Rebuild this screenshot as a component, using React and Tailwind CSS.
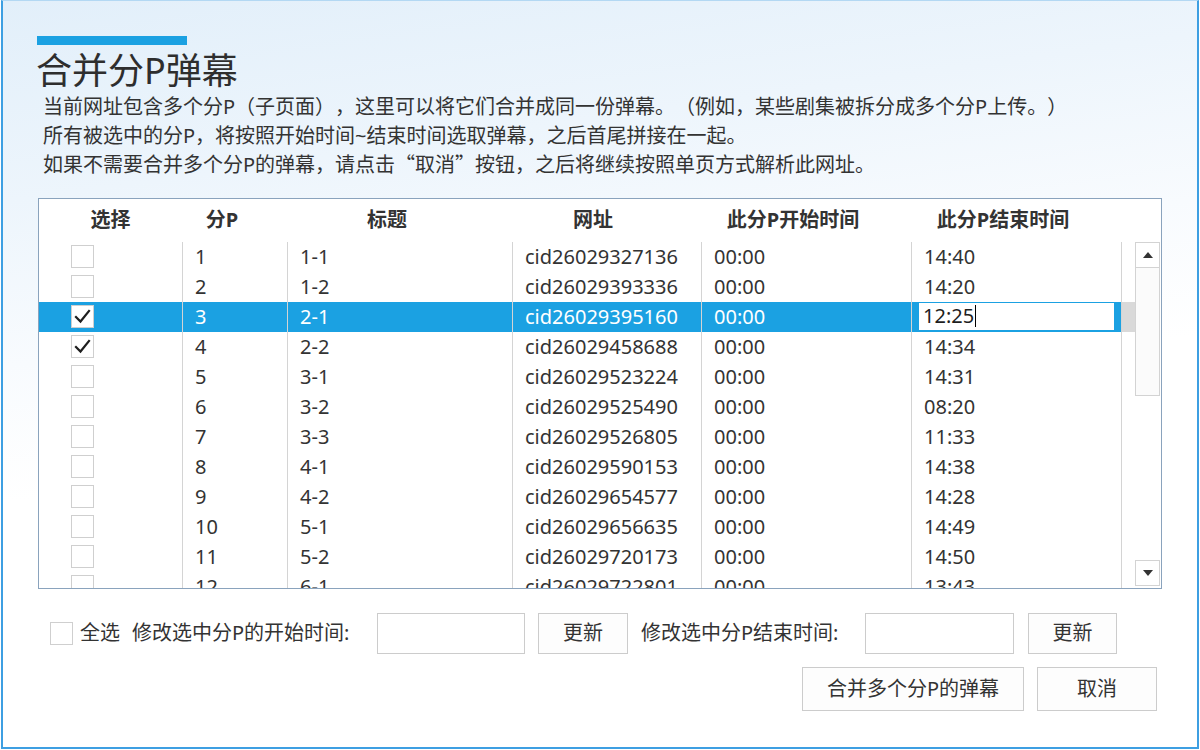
import React from "react";

const rows = [
  ["1", "1-1", "cid26029327136", "00:00", "14:40", false],
  ["2", "1-2", "cid26029393336", "00:00", "14:20", false],
  ["3", "2-1", "cid26029395160", "00:00", "12:25", true],
  ["4", "2-2", "cid26029458688", "00:00", "14:34", true],
  ["5", "3-1", "cid26029523224", "00:00", "14:31", false],
  ["6", "3-2", "cid26029525490", "00:00", "08:20", false],
  ["7", "3-3", "cid26029526805", "00:00", "11:33", false],
  ["8", "4-1", "cid26029590153", "00:00", "14:38", false],
  ["9", "4-2", "cid26029654577", "00:00", "14:28", false],
  ["10", "5-1", "cid26029656635", "00:00", "14:49", false],
  ["11", "5-2", "cid26029720173", "00:00", "14:50", false],
  ["12", "6-1", "cid26029722801", "00:00", "13:43", false],
];

function Check({ checked }) {
  return (
    <div className="w-[23px] h-[23px] border border-[#cfcfcf] bg-white flex items-center justify-center shrink-0">
      {checked && (
        <svg width="17" height="15" viewBox="0 0 17 15">
          <path d="M2 8 L6.5 12.5 L15 2" fill="none" stroke="#1e1e1e" strokeWidth="2.2" strokeLinecap="square" strokeLinejoin="miter" />
        </svg>
      )}
    </div>
  );
}

function Row({ r, idx }) {
  const [n, t, cid, st, et, checked] = r;
  const sel = idx === 2;
  const cell = "border-l border-[#d4d4d4] pl-3 flex items-center shrink-0";
  return (
    <div className={`flex h-[30px] shrink-0 ${sel ? "bg-[#1ba1e2] text-white" : "text-[#333]"}`}>
      <div className="w-[143px] flex items-center pl-[32px] shrink-0">
        <Check checked={checked} />
      </div>
      <div className={`w-[105px] ${cell}`}>{n}</div>
      <div className={`w-[225px] ${cell}`}>{t}</div>
      <div className={`w-[189px] ${cell}`}>{cid}</div>
      <div className={`w-[210px] ${cell}`}>{st}</div>
      {sel ? (
        <div className="w-[210px] border-l border-[#d4d4d4] flex items-start pl-[7px] pr-[7px] pt-[1px] shrink-0">
          <div className="w-full h-[27px] bg-white text-[#1e1e1e] flex items-center pl-[4px]">
            <span>{et}</span>
            <span className="inline-block w-[1px] h-[22px] bg-black ml-[1px]" />
          </div>
        </div>
      ) : (
        <div className={`w-[210px] ${cell}`}>{et}</div>
      )}
      <div className={`w-[14px] border-l border-[#d4d4d4] shrink-0 ${sel ? "bg-[#d9d9d9]" : "bg-white"}`} />
    </div>
  );
}

const cjk = "font-['Noto_Sans_CJK_SC',sans-serif]";

export default function App() {
  return (
    <div className="w-[1200px] h-[750px] bg-white pl-[1px] pr-[1px] pb-[1px] font-['Noto_Sans','Noto_Sans_CJK_SC',sans-serif] text-[#333] [text-spacing-trim:space-all]">
      <div className="w-full h-full border-l-2 border-r-2 border-b-2 border-t border-[#3d9fe2] border-t-[#b3d8f3] bg-[linear-gradient(172deg,#e2effa_0%,#edf5fc_22%,#f8fbfe_40%,#ffffff_55%)] flex flex-col overflow-hidden">
        <div className="ml-[34px] mt-[35px] w-[150px] h-[9px] bg-[#1ba1e2] shrink-0" />
        <div className="ml-[33px] mt-[4px] text-[36px] leading-[44px] text-[#2e2e2e]">合并分P弹幕</div>
        <div className="ml-[40px] text-[20px] leading-[28.5px] text-[#333]">
          <div className="h-[28.5px]">当前网址包含多个分P（子页面），这里可以将它们合并成同一份弹幕。（例如，某些剧集被拆分成多个分P上传。）</div>
          <div className="h-[28.5px]">所有被选中的分P，将按照开始时间~结束时间选取弹幕，之后首尾拼接在一起。</div>
          <div className="h-[28.5px]">
            如果不需要合并多个分P的弹幕，请点击<span className={cjk}>“</span>取消<span className={cjk}>”</span>按钮，之后将继续按照单页方式解析此网址。
          </div>
        </div>

        <div className="ml-[35px] mt-[19px] w-[1124px] h-[391px] border border-[#8aa3bd] bg-white flex flex-col shrink-0 text-[20px]">
          <div className="flex h-[43px] items-center font-bold text-[#333] shrink-0">
            <div className="w-[143px] text-center">选择</div>
            <div className="w-[80px] text-center">分P</div>
            <div className="w-[250px] text-center">标题</div>
            <div className="w-[162px] text-center">网址</div>
            <div className="w-[238px] text-center">此分P开始时间</div>
            <div className="w-[182px] text-center">此分P结束时间</div>
          </div>
          <div className="flex h-[346px] overflow-hidden">
            <div className="w-[1096px] h-full overflow-hidden flex flex-col shrink-0">
              {rows.map((r, i) => (
                <Row key={i} r={r} idx={i} />
              ))}
            </div>
            <div className="w-[25px] h-full flex flex-col bg-white shrink-0">
              <div className="h-[26px] border border-[#d3d3d3] flex items-center justify-center bg-white shrink-0">
                <svg width="10" height="6" viewBox="0 0 10 6">
                  <polygon points="0,6 10,6 5,0" fill="#333" />
                </svg>
              </div>
              <div className="h-[128px] border border-t-0 border-[#d3d3d3] bg-[#fbfbfb] shrink-0" />
              <div className="flex-1" />
              <div className="h-[26px] border border-[#d3d3d3] flex items-center justify-center bg-white mb-[2px] shrink-0">
                <svg width="10" height="6" viewBox="0 0 10 6">
                  <polygon points="0,0 10,0 5,6" fill="#333" />
                </svg>
              </div>
            </div>
            <div className="w-[1px]" />
          </div>
        </div>

        <div className="flex items-center mt-[24px] h-[41px] text-[20px] text-[#333] shrink-0">
          <div className="ml-[47px]">
            <Check checked={false} />
          </div>
          <div className="ml-[7px] w-[52px]">全选</div>
          <div className="w-[245px]">修改选中分P的开始时间:</div>
          <div className="w-[148px] h-[41px] border border-[#cccccc] bg-white" />
          <div className="ml-[13px] w-[90px] h-[41px] border border-[#cccccc] bg-[#fdfdfd] flex items-center justify-center">更新</div>
          <div className="ml-[13px] w-[224px]">修改选中分P结束时间:</div>
          <div className="w-[149px] h-[41px] border border-[#cccccc] bg-white" />
          <div className="ml-[14px] w-[89px] h-[41px] border border-[#cccccc] bg-[#fdfdfd] flex items-center justify-center">更新</div>
        </div>

        <div className="flex justify-end pr-[40px] mt-[13px] gap-[13px] text-[20px] text-[#333] shrink-0">
          <div className="w-[222px] h-[44px] border border-[#cccccc] bg-[#fdfdfd] flex items-center justify-center">合并多个分P的弹幕</div>
          <div className="w-[120px] h-[44px] border border-[#cccccc] bg-[#fdfdfd] flex items-center justify-center">取消</div>
        </div>
      </div>
    </div>
  );
}
